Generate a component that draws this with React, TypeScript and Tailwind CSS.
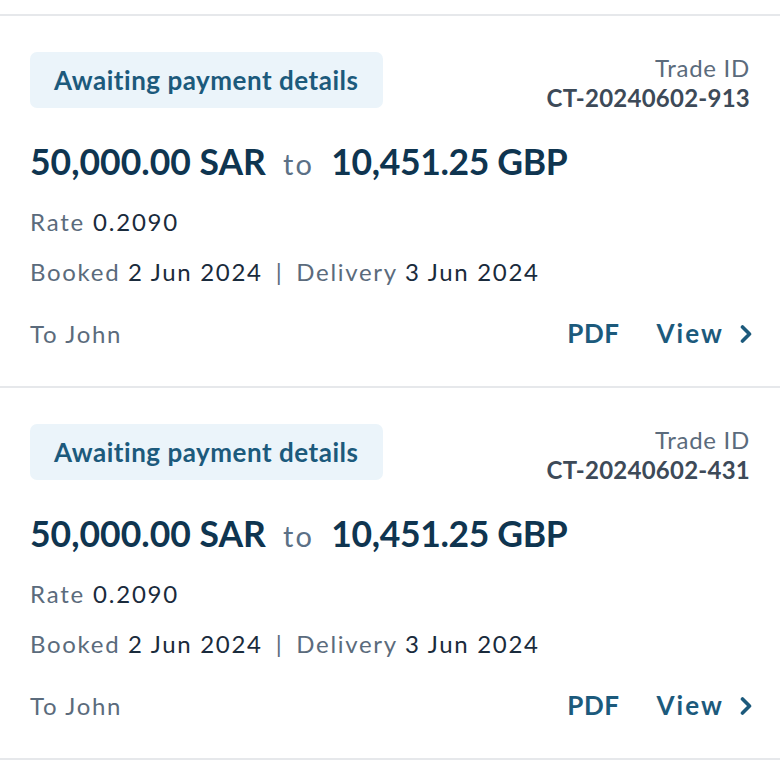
interface TradeCardProps {
  tradeId: string
}

function TradeCard({ tradeId }: TradeCardProps) {
  return (
    <div className="border-b-2 border-[#e6e8eb] px-[30px] pt-[36px] h-[372px]">
      <div className="flex justify-between items-start">
        <div className="h-[56px] px-[24px] flex items-center rounded-[7px] bg-[#ebf4fa] text-[26px] tracking-[0.02em] font-bold text-[#1c5a7c]">
          Awaiting payment details
        </div>
        <div className="text-right text-[24px] leading-[30px] pt-[1px]">
          <div className="tracking-[0.03em] text-[#5b6b7c]">Trade ID</div>
          <div className="tracking-[0.01em] font-bold text-[#3d4a58]">{tradeId}</div>
        </div>
      </div>
      <div className="mt-[28px] flex items-baseline text-[#0f3550] font-bold text-[35.5px] leading-[42px]">
        <span>50,000.00 SAR</span>
        <span className="mx-[17px] text-[29px] tracking-[0.08em] font-normal text-[#5b7086]">to</span>
        <span className="tracking-[-0.01em]">10,451.25 GBP</span>
      </div>
      <div className="mt-[22px] text-[24px] tracking-[0.075em] leading-[30px]">
        <span className="text-[#5b6b7c]">Rate </span>
        <span className="text-[#1a2b3c]">0.2090</span>
      </div>
      <div className="mt-[20px] text-[24px] tracking-[0.07em] leading-[30px]">
        <span className="text-[#5b6b7c]">Booked </span>
        <span className="text-[#1a2b3c]">2 Jun 2024</span>
        <span className="text-[#5b6b7c] mx-[13px]">|</span>
        <span className="text-[#5b6b7c]">Delivery </span>
        <span className="text-[#1a2b3c]">3 Jun 2024</span>
      </div>
      <div className="mt-[27px] flex items-center justify-between">
        <span className="text-[24px] tracking-[0.07em] leading-[30px] text-[#5b6b7c]">To John</span>
        <div className="flex items-center text-[26px] leading-[39px] font-bold text-[#1c5a7c]">
          <span className="tracking-[0.02em]">PDF</span>
          <span className="ml-[37px] tracking-[0.08em]">View</span>
          <svg className="ml-[16px] -mr-[3px]" width="13" height="20" viewBox="0 0 13 20" fill="none">
            <polyline points="2.5,3 9.5,10 2.5,17" stroke="currentColor" strokeWidth="3.6" strokeLinecap="round" strokeLinejoin="round" />
          </svg>
        </div>
      </div>
    </div>
  )
}

export default function App() {
  return (
    <div className="bg-white w-[780px] h-[762px] overflow-hidden font-['Lato',sans-serif]">
      <div className="pt-[14px] border-b-2 border-[#e6e8eb]" />
      <TradeCard tradeId="CT-20240602-913" />
      <TradeCard tradeId="CT-20240602-431" />
    </div>
  )
}
